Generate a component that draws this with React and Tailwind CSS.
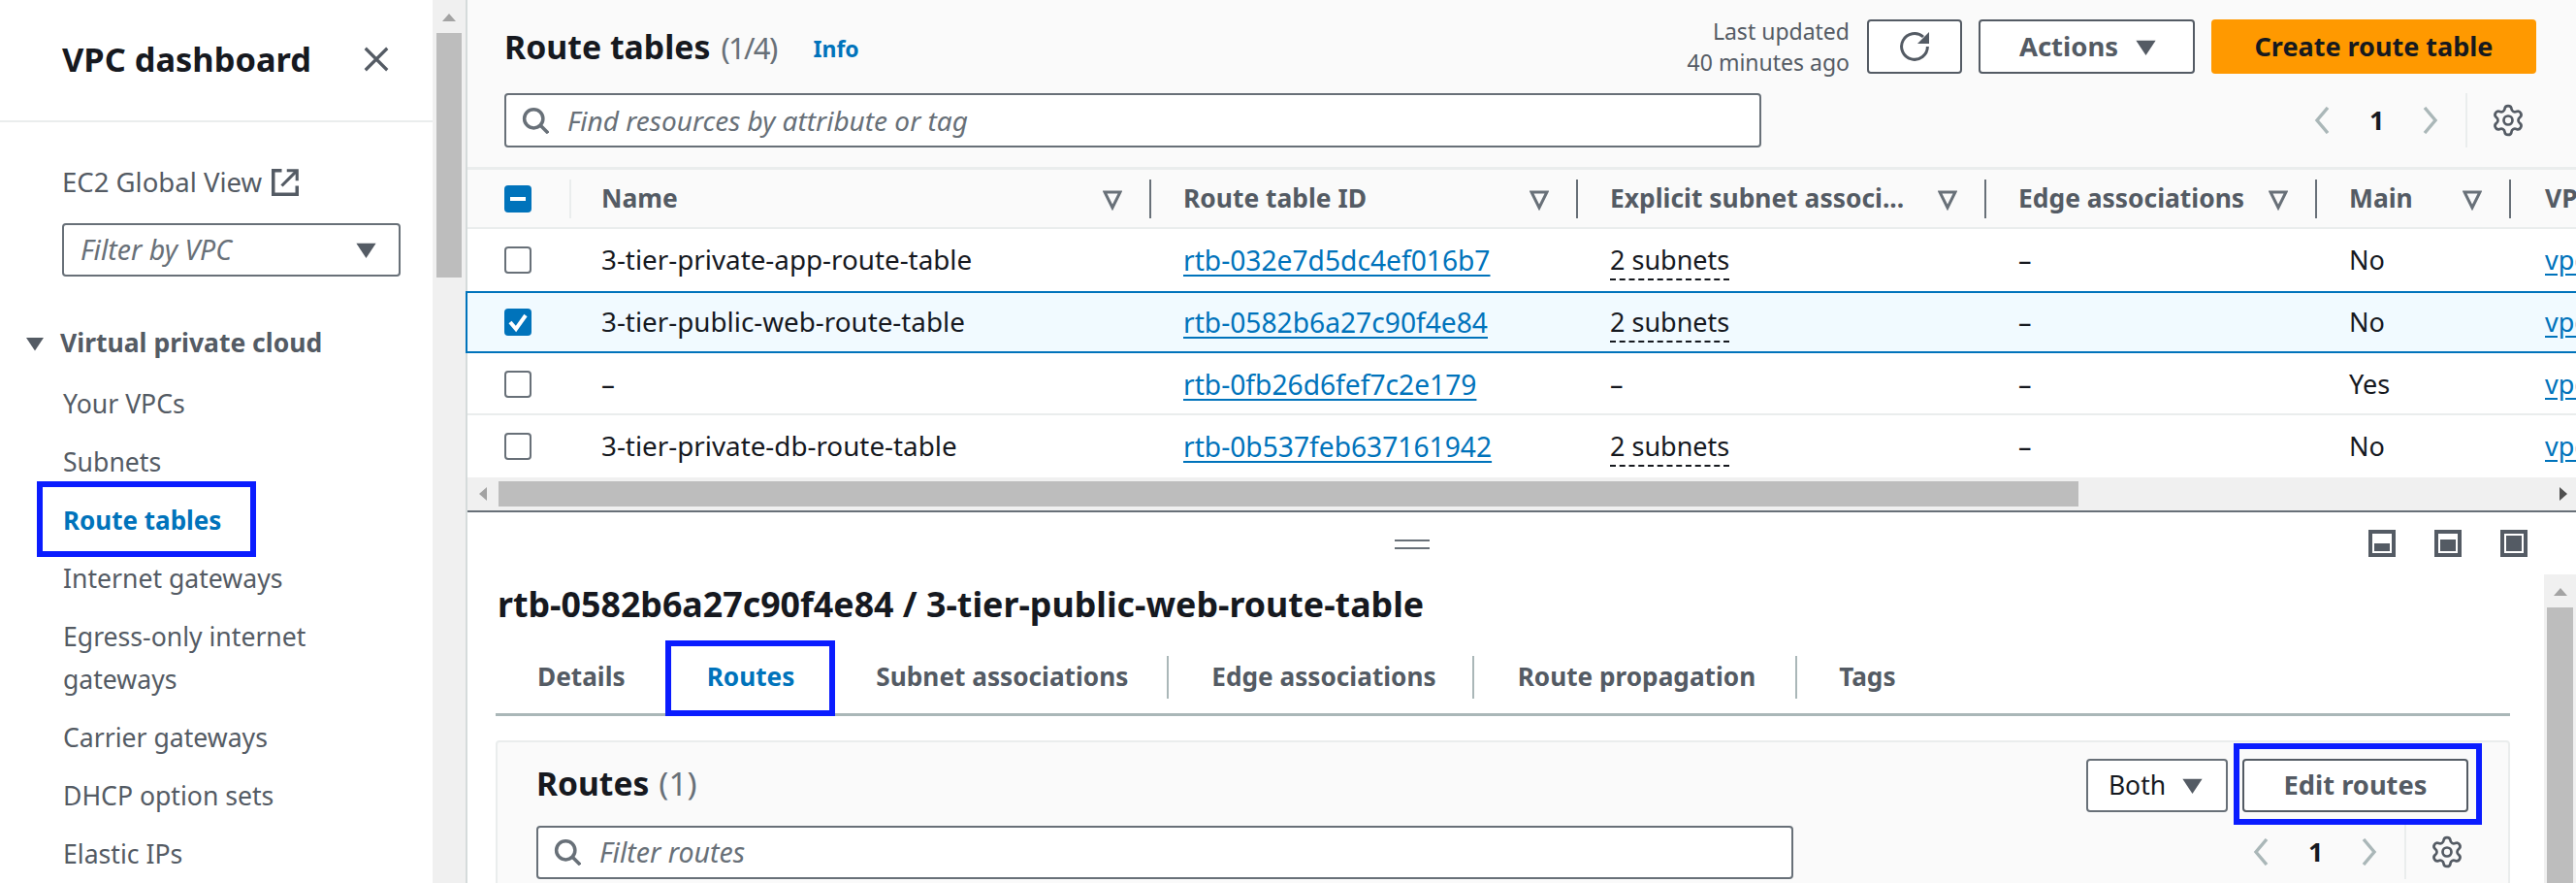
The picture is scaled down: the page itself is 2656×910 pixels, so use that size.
import { Settings } from "lucide-react";

const FONT = "font-['Noto_Sans','Open_Sans',sans-serif]";
const COLS = "grid grid-cols-[138px_600px_440px_421px_341px_200px_100px]";

const Caret = ({ className = "" }) => (
  <svg viewBox="0 0 16 16" className={className} fill="currentColor">
    <path d="M2 4h12L8 13z" />
  </svg>
);

const CloseIcon = () => (
  <svg viewBox="0 0 16 16" className="w-[30px] h-[30px] text-[#545b64]" fill="none" stroke="currentColor" strokeWidth="1.7">
    <path d="M2 2l12 12M14 2L2 14" />
  </svg>
);

const ExternalIcon = () => (
  <svg viewBox="0 0 16 16" className="w-[28px] h-[28px] text-[#545b64]" fill="none" stroke="currentColor" strokeWidth="2">
    <path d="M15 10v5H1V1h5" />
    <path d="M14.5 1.5 6 10" strokeWidth="1.8" />
    <path d="M9 1h6v6" strokeWidth="1.8" />
  </svg>
);

const SearchIcon = () => (
  <svg viewBox="0 0 16 16" className="w-[28px] h-[28px] text-[#687078] shrink-0" fill="none" stroke="currentColor" strokeWidth="2">
    <circle cx="7" cy="7" r="5.5" />
    <path d="M11 11l4.5 4.5" />
  </svg>
);

const RefreshIcon = () => (
  <svg viewBox="0 0 16 16" className="w-[32px] h-[32px] text-[#545b64]">
    <path d="M14.7 8a6.7 6.7 0 1 1-2.2-5" fill="none" stroke="currentColor" strokeWidth="1.5" />
    <path d="M15.5 .5v6h-6z" fill="currentColor" />
  </svg>
);

const Funnel = () => (
  <svg viewBox="0 0 20 24" className="w-[20px] h-[24px] text-[#687078] shrink-0" fill="none" stroke="currentColor" strokeWidth="3">
    <path d="M2 5h16L10 21z" />
  </svg>
);

const Chevron = ({ dir }) => (
  <svg viewBox="0 0 16 28" className="w-[16px] h-[28px] text-[#aab7b8]" fill="none" stroke="currentColor" strokeWidth="3.4">
    <path d={dir === "left" ? "M14 1 3 14l11 13" : "M2 1l11 13L2 27"} />
  </svg>
);

const PanelIcon = ({ top }) => (
  <svg viewBox="0 0 28 28" className="w-[28px] h-[28px]">
    <rect x="2" y="2" width="24" height="24" fill="none" stroke="#545b64" strokeWidth="4" />
    <rect x="6" y={top} width="16" height={22 - top} fill="#545b64" />
  </svg>
);

const Pager = ({ className = "" }) => (
  <div className={`flex items-center h-[56px] ${className}`}>
    <Chevron dir="left" />
    <span className="ml-[41px] w-[15px] text-[27px] font-bold text-[#16191f]">1</span>
    <span className="ml-[40px]"><Chevron dir="right" /></span>
    <div className="ml-[28px] w-[2px] h-[56px] bg-[#eaeded]" />
    <Settings className="ml-[24px] w-[36px] h-[36px] text-[#545b64]" strokeWidth={1.8} />
  </div>
);

const Blue = ({ className }) => (
  <div className={`absolute border-[#0a1cff] pointer-events-none ${className}`} />
);

const navTop = ["Your VPCs", "Subnets"];
const navBottom = ["Internet gateways", "Egress-only internet gateways", "Carrier gateways", "DHCP option sets", "Elastic IPs"];

const Sidebar = () => (
  <aside className="w-[446px] shrink-0 flex flex-col bg-white">
    <div className="h-[126px] shrink-0 border-b-2 border-[#eaeded] flex items-center justify-between pl-[64px] pr-[43px] pb-[2px]">
      <h1 className="text-[34.4px] font-bold leading-none text-[#16191f]">VPC dashboard</h1>
      <CloseIcon />
    </div>
    <div className="flex items-center pl-[64px] mt-[44px] h-[36px] text-[27.5px] text-[#545b64]">
      EC2 Global View
      <span className="ml-[10px]"><ExternalIcon /></span>
    </div>
    <div className="ml-[64px] mt-[24px] w-[349px] h-[64px] border-2 border-[#687078] rounded-[4px] flex items-center justify-between pl-[17px] pr-[20px] text-[28.5px] italic text-[#687078] bg-white">
      Filter by VPC
      <Caret className="w-[27px] h-[27px] text-[#545b64]" />
    </div>
    <div className="flex items-center pl-[24px] mt-[53px] h-[32px] text-[26.5px] font-bold text-[#545b64]">
      <Caret className="w-[24px] h-[24px] mr-[14px]" />
      Virtual private cloud
    </div>
    <nav className="mt-[16px] pl-[65px] pr-[60px] text-[26.6px] leading-[44px] text-[#545b64]">
      {navTop.map((n) => <div key={n} className="py-[8px]">{n}</div>)}
      <div className="relative py-[8px] text-[26px] font-bold text-[#0073bb]">
        Route tables
        <Blue className="-left-[27px] -top-[10px] w-[226px] h-[78px] border-[6px]" />
      </div>
      {navBottom.map((n) => <div key={n} className="py-[8px]">{n}</div>)}
    </nav>
  </aside>
);

const Scrollbar = () => (
  <div className="w-[34px] shrink-0 bg-[#f0f0f0] flex flex-col items-center pt-[14px]">
    <div className="w-0 h-0 border-x-[7px] border-x-transparent border-b-[8px] border-b-[#a3a3a3]" />
    <div className="mt-[12px] w-[26px] h-[252px] bg-[#bdbdbd]" />
  </div>
);

const HeaderCell = ({ label, className = "" }) => (
  <div className={`flex items-center pr-[33px] ${className}`}>
    <span className="flex-1 whitespace-nowrap">{label}</span>
    <Funnel />
    <div className="ml-[28px] w-[2px] h-[40px] bg-[#687078]" />
  </div>
);

const Checkbox = ({ state }) => {
  if (state === "none")
    return <div className="w-[28px] h-[28px] rounded-[4px] border-2 border-[#687078] bg-white" />;
  return (
    <div className="w-[28px] h-[28px] rounded-[4px] bg-[#0073bb] flex items-center justify-center">
      <svg viewBox="0 0 28 28" className="w-[28px] h-[28px]" fill="none" stroke="white" strokeWidth="4">
        {state === "some" ? <path d="M6 14h16" /> : <path d="M6 14l6 7 10-14" />}
      </svg>
    </div>
  );
};

const rows = [
  { name: "3-tier-private-app-route-table", id: "rtb-032e7d5dc4ef016b7", subnets: "2 subnets", main: "No" },
  { name: "3-tier-public-web-route-table", id: "rtb-0582b6a27c90f4e84", subnets: "2 subnets", main: "No", selected: true },
  { name: "–", id: "rtb-0fb26d6fef7c2e179", subnets: "–", main: "Yes" },
  { name: "3-tier-private-db-route-table", id: "rtb-0b537feb637161942", subnets: "2 subnets", main: "No" },
];

const TopPanel = () => (
  <section className="h-[528px] shrink-0 flex flex-col border-b-2 border-[#687078]">
    <div className="h-[175px] shrink-0 bg-[#fafafa] border-b-[3px] border-[#eaeded] pt-[20px] pl-[38px] pr-[41px]">
      <div className="flex items-center justify-between h-[56px]">
        <div className="flex items-baseline">
          <h2 className="text-[33.8px] font-bold text-[#16191f]">Route tables</h2>
          <span className="ml-[11px] text-[31px] tracking-[-1.7px] text-[#687078]">(1/4)</span>
          <span className="ml-[38px] -translate-y-[2px] text-[23px] font-bold text-[#0073bb]">Info</span>
        </div>
        <div className="flex items-center">
          <div className="text-right text-[23px] leading-[32px] text-[#545b64]">
            <div>Last updated</div>
            <div>40 minutes ago</div>
          </div>
          <button className="ml-[18px] w-[98px] h-[56px] border-2 border-[#545b64] rounded-[4px] bg-white flex items-center justify-center"><RefreshIcon /></button>
          <button className="ml-[17px] w-[223px] h-[56px] border-2 border-[#545b64] rounded-[4px] bg-white flex items-center justify-center gap-[15px] pl-[5px] text-[27.5px] font-bold text-[#545b64]">
            Actions <Caret className="w-[27px] h-[27px]" />
          </button>
          <button className="ml-[17px] w-[335px] h-[56px] rounded-[4px] bg-[#ff9900] text-[27px] font-bold text-[#16191f]">Create route table</button>
        </div>
      </div>
      <div className="flex items-center justify-between mt-[20px]">
        <div className="w-[1296px] h-[56px] border-2 border-[#687078] rounded-[4px] bg-white flex items-center pl-[16px] gap-[19px] text-[28px] italic text-[#687078]">
          <SearchIcon />
          Find resources by attribute or tag
        </div>
        <Pager className="mr-[11px]" />
      </div>
    </div>
    <div className={`${COLS} h-[61px] shrink-0 items-center overflow-hidden bg-[#fafafa] border-b-2 border-[#eaeded] text-[26.4px] font-bold text-[#545b64]`}>
      <div className="flex items-center pl-[38px]">
        <Checkbox state="some" />
        <div className="ml-[39px] w-[2px] h-[40px] bg-[#eaeded]" />
      </div>
      <HeaderCell label="Name" />
      <HeaderCell label="Route table ID" />
      <HeaderCell label="Explicit subnet associ..." />
      <HeaderCell label="Edge associations" />
      <HeaderCell label="Main" />
      <span className="pl-[2px]">VPC</span>
    </div>
    {rows.map((r, i) => (
      <div
        key={r.id}
        className={`${COLS} h-[64px] shrink-0 items-center overflow-hidden text-[27px] text-[#16191f] ${
          r.selected ? "bg-[#f1faff] border-y-2 border-l-2 border-[#0073bb] -ml-[2px]" : i === 2 ? "bg-white border-b-2 pt-[2px] border-[#eaeded]" : "bg-white"
        }`}
      >
        <div className="pl-[38px]"><Checkbox state={r.selected ? "checked" : "none"} /></div>
        <span className="whitespace-nowrap text-[27.8px]">{r.name}</span>
        <span className="text-[28.2px]"><a className="underline underline-offset-4 text-[#0073bb]">{r.id}</a></span>
        <span>
          {r.subnets === "–" ? r.subnets : <span className="border-b-2 border-dashed border-[#16191f] pb-[1px]">{r.subnets}</span>}
        </span>
        <span>–</span>
        <span>{r.main}</span>
        <span className="pl-[2px] whitespace-nowrap"><a className="underline underline-offset-4 text-[#0073bb]">vpc-0a</a></span>
      </div>
    ))}
    <div className="h-[34px] shrink-0 bg-[#f0f0f0] flex items-center">
      <div className="w-[32px] flex justify-center">
        <div className="w-0 h-0 border-y-[7px] border-y-transparent border-r-[8px] border-r-[#a3a3a3]" />
      </div>
      <div className="w-[1629px] h-[26px] bg-[#bdbdbd]" />
      <div className="ml-auto mr-[9px] w-0 h-0 border-y-[7px] border-y-transparent border-l-[8px] border-l-[#505050]" />
    </div>
  </section>
);

const tabs = [
  { label: "Details", pad: "pl-[43px] pr-[42px]" },
  { label: "Routes", pad: "px-[42px] text-[#0073bb]", box: true },
  { label: "Subnet associations", pad: "pl-[42px] pr-[40px]", sep: true },
  { label: "Edge associations", pad: "pl-[44px] pr-[37px]", sep: true },
  { label: "Route propagation", pad: "pl-[45px] pr-[41px]", sep: true },
  { label: "Tags", pad: "pl-[43px]" },
];

const Tabs = () => (
  <div className="flex h-[78px] ml-[1px] border-b-[3px] border-[#aab7b8] mt-[18px] text-[26.2px] font-bold text-[#545b64]">
    {tabs.map((t) => (
      <div key={t.label} className="relative flex items-center">
        <div className={`whitespace-nowrap ${t.pad}`}>{t.label}</div>
        {t.sep && <div className="w-[2px] h-[44px] bg-[#aab7b8]" />}
        {t.box && <Blue className="-left-[1px] top-0 w-[175px] h-[78px] border-[6px]" />}
      </div>
    ))}
  </div>
);

const RoutesPanel = () => (
  <div className="mt-[25px] ml-[1px] h-[200px] border-2 border-[#eaeded] rounded-t-[4px] bg-[#fafafa] pl-[40px] pr-[41px]">
    <div className="flex items-center justify-between h-[85px] pt-[4px]">
      <div className="flex items-baseline mb-[6px] text-[33.6px] leading-[44px]">
        <span className="font-bold text-[#16191f]">Routes</span>
        <span className="ml-[10px] text-[#687078]">(1)</span>
      </div>
      <div className="flex items-center">
        <button className="w-[146px] h-[55px] border-2 border-[#687078] rounded-[4px] bg-white flex items-center justify-center gap-[14px] text-[26.5px] text-[#16191f]">
          Both <Caret className="w-[27px] h-[27px] text-[#545b64]" />
        </button>
        <div className="relative ml-[15px]">
          <button className="block w-[233px] h-[55px] border-2 border-[#545b64] rounded-[4px] bg-white text-[27.3px] font-bold text-[#545b64]">Edit routes</button>
          <Blue className="-left-[9px] -top-[16px] w-[256px] h-[84px] border-[6px]" />
        </div>
      </div>
    </div>
    <div className="flex items-center justify-between">
      <div className="w-[1296px] h-[55px] border-2 border-[#687078] rounded-[4px] bg-white flex items-center pl-[16px] gap-[19px] text-[28.5px] italic text-[#687078]">
        <SearchIcon />
        Filter routes
      </div>
      <Pager className="mr-[4px]" />
    </div>
  </div>
);

const BottomPanel = () => (
  <section className="flex-1 flex flex-col bg-white min-h-0">
    <div className="relative h-[64px] shrink-0 flex items-center justify-end pr-[50px] gap-[40px]">
      <div className="absolute left-[956px] top-[28px] w-[36px] h-[10px] border-y-2 border-[#687078]" />
      <PanelIcon top={14} />
      <PanelIcon top={10} />
      <PanelIcon top={6} />
    </div>
    <div className="flex-1 flex min-h-0">
      <div className="flex-1 min-w-0 pl-[28px]">
        <h2 className="ml-[3px] pt-[10px] text-[35.75px] leading-[40px] font-bold text-[#16191f] whitespace-nowrap">rtb-0582b6a27c90f4e84 / 3-tier-public-web-route-table</h2>
        <Tabs />
        <RoutesPanel />
      </div>
      <div className="ml-[35px] w-[33px] shrink-0 bg-[#f0f0f0] flex flex-col items-center pt-[14px]">
        <div className="w-0 h-0 border-x-[7px] border-x-transparent border-b-[8px] border-b-[#a3a3a3]" />
        <div className="mt-[12px] w-[27px] flex-1 bg-[#bdbdbd]" />
      </div>
    </div>
  </section>
);

export default function App() {
  return (
    <div className={`flex h-[910px] w-[2656px] overflow-hidden bg-white ${FONT}`}>
      <Sidebar />
      <Scrollbar />
      <main className="flex-1 min-w-0 flex flex-col border-l-2 border-[#d5dbdb]">
        <TopPanel />
        <BottomPanel />
      </main>
    </div>
  );
}
